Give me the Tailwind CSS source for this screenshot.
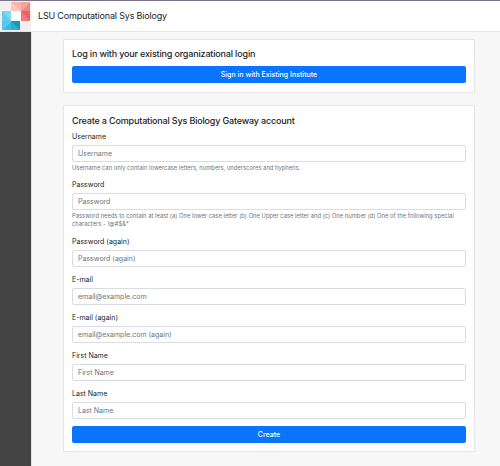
<!DOCTYPE html>
<html lang="en">
<head>
<meta charset="utf-8">
<title>LSU Computational Sys Biology</title>
<script src="https://cdn.jsdelivr.net/npm/@tailwindcss/browser@4"></script>
</head>
<body class="h-[466px] w-[500px] overflow-hidden bg-[#f7f7f7] font-['Inter','Liberation_Sans',sans-serif] text-[#212529]">
<div class="flex h-full flex-col">
  <header class="flex h-8 shrink-0 items-center border-t border-b border-t-[#7b748c] border-b-[#e6e6e6] bg-white">
    <div class="h-[30px] w-[31px] shrink-0 bg-[#f0f0f0]">
      <svg class="block" width="31" height="30" viewBox="0 0 31 30">
        <path fill="#f7b5ae" d="M11 1h10v9H11z"/>
        <path fill="#f9c6c0" d="M11 1l10 9H11z"/>
        <path fill="#f4a09b" d="M21 1h9l-9 9z"/>
        <path fill="#f08583" d="M30 1v9h-9z"/>
        <path fill="#ee7b7b" d="M21 10h9v10h-9z"/>
        <path fill="#ec6163" d="M21 10l9 10v-10z"/>
        <path fill="#7fd7ef" d="M2 10h9v10H2z"/>
        <path fill="#5fcbec" d="M2 10l9 10H2z"/>
        <path fill="#55c8ee" d="M2 20h9l-9 9z"/>
        <path fill="#3fb8df" d="M11 20v9H2z"/>
        <path fill="#2eaecb" d="M11 20h9v9h-9z"/>
        <path fill="#1a98b6" d="M11 20h9v9z"/>
        <path fill="#fbfbfb" d="M11 10h10v10H11z"/>
      </svg>
    </div>
    <h1 class="ml-[7px] text-[9px] leading-3 tracking-[-0.18px]">LSU Computational Sys Biology</h1>
  </header>
  <div class="flex min-h-0 flex-1">
    <aside class="w-8 shrink-0 border-r border-[#e2e2e2] bg-[#444]"></aside>
    <main class="flex-1 pt-[7px] pl-[31px]">
      <section class="h-[54px] w-[412px] rounded-[2px] border border-[#e7e7e7] bg-white px-2 pt-2 shadow-[0_0_1px_#ddd]">
        <h2 class="text-[9px] leading-3 font-medium tracking-[-0.17px]">Log in with your existing organizational login</h2>
        <button class="mt-[6px] block h-[17px] w-full rounded-[2px] bg-[#0a74ff] text-center text-[7px] leading-[17px] font-medium tracking-[0.02px] text-white">Sign in with Existing Institute</button>
      </section>
      <section class="mt-3 h-[347px] w-[412px] rounded-[2px] border border-[#e7e7e7] bg-white px-2 pt-[9px] shadow-[0_0_1px_#ddd]">
        <h2 class="text-[9px] leading-3 font-medium tracking-[-0.17px]">Create a Computational Sys Biology Gateway account</h2>
        <form class="text-[7px]">
          <div class="mt-[3px] h-12">
            <label class="block h-[15px] leading-[13px]" for="u">Username</label>
            <input id="u" placeholder="Username" class="block h-[17px] w-full rounded-[2px] border border-[#d9dde1] px-[5px] placeholder:text-[#6c757d]">
            <p class="pt-[2px] text-[5.8px] leading-[8px] tracking-[0.02px] text-[#6c757d]">Username can only contain lowercase letters, numbers, underscores and hyphens.</p>
          </div>
          <div class="h-[57px]">
            <label class="block h-[15px] leading-[13px]" for="p">Password</label>
            <input id="p" placeholder="Password" class="block h-[17px] w-full rounded-[2px] border border-[#d9dde1] px-[5px] placeholder:text-[#6c757d]">
            <p class="pt-[2px] text-[5.8px] leading-[8px] tracking-[0.02px] text-[#6c757d]">Password needs to contain at least (a) One lower case letter (b) One Upper case letter and (c) One number (d) One of the following special<br>characters - !@#$&amp;*</p>
          </div>
          <div class="h-[38px]">
            <label class="block h-[15px] leading-[13px]" for="pa">Password (again)</label>
            <input id="pa" placeholder="Password (again)" class="block h-[17px] w-full rounded-[2px] border border-[#d9dde1] px-[5px] placeholder:text-[#6c757d]">
          </div>
          <div class="h-[38px]">
            <label class="block h-[15px] leading-[13px]" for="e">E-mail</label>
            <input id="e" placeholder="email@example.com" class="block h-[17px] w-full rounded-[2px] border border-[#d9dde1] px-[5px] placeholder:text-[#6c757d]">
          </div>
          <div class="h-[38px]">
            <label class="block h-[15px] leading-[13px]" for="ea">E-mail (again)</label>
            <input id="ea" placeholder="email@example.com (again)" class="block h-[17px] w-full rounded-[2px] border border-[#d9dde1] px-[5px] placeholder:text-[#6c757d]">
          </div>
          <div class="h-[38px]">
            <label class="block h-[15px] leading-[13px]" for="f">First Name</label>
            <input id="f" placeholder="First Name" class="block h-[17px] w-full rounded-[2px] border border-[#d9dde1] px-[5px] placeholder:text-[#6c757d]">
          </div>
          <div class="h-[39px]">
            <label class="block h-[15px] leading-[13px]" for="l">Last Name</label>
            <input id="l" placeholder="Last Name" class="block h-[17px] w-full rounded-[2px] border border-[#d9dde1] px-[5px] placeholder:text-[#6c757d]">
          </div>
          <button type="button" class="block h-[17px] w-full rounded-[2px] bg-[#0a74ff] text-center leading-[17px] font-medium text-white">Create</button>
        </form>
      </section>
    </main>
  </div>
</div>
</body>
</html>
